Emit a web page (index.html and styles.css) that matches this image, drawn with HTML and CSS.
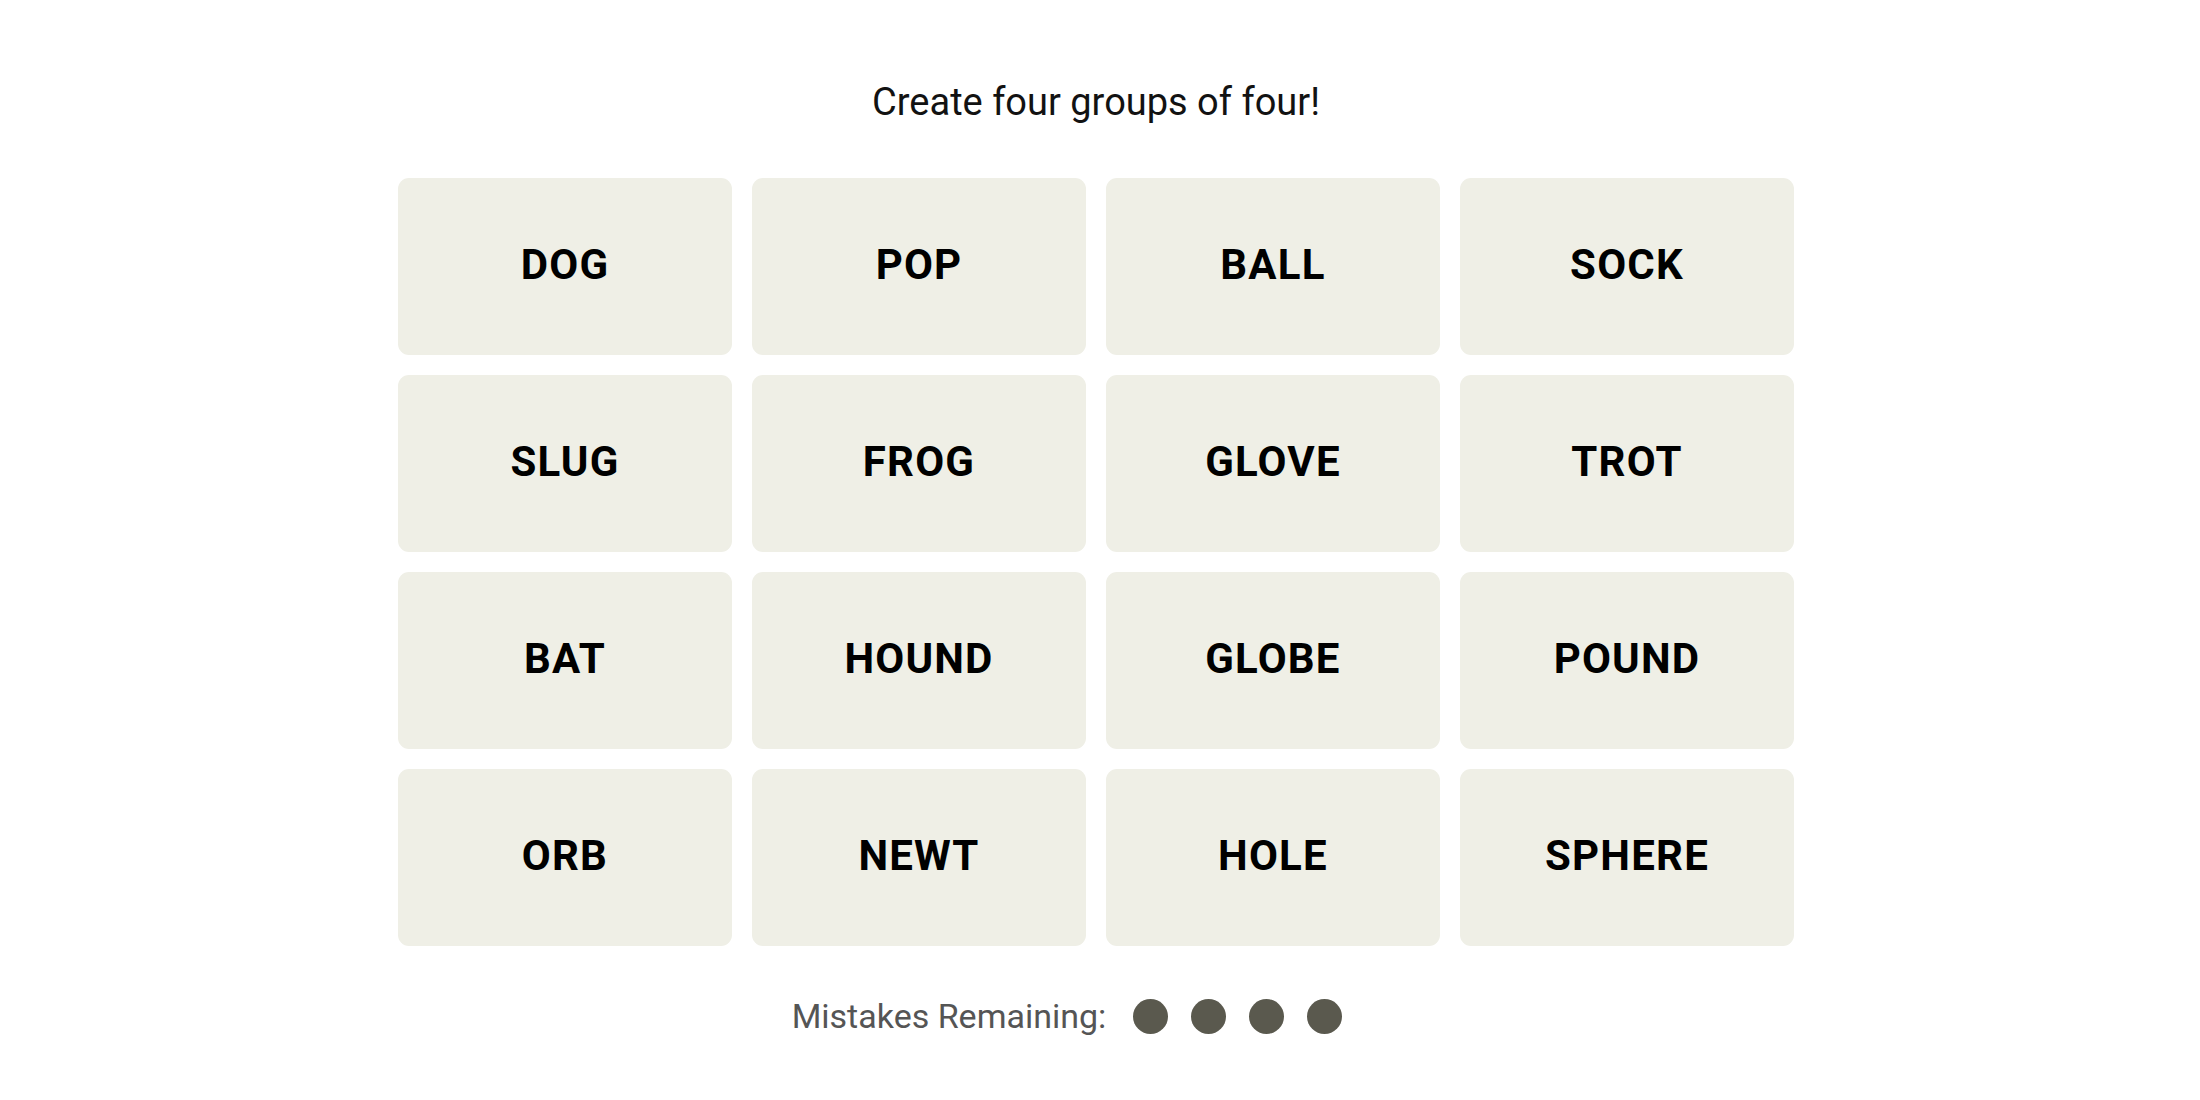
FILE: index.html
```html
<!DOCTYPE html>
<html lang="en">
<head>
<meta charset="utf-8">
<title>Connections</title>
<link rel="stylesheet" href="styles.css">
</head>
<body>
<main class="game">
  <p class="prompt">Create four groups of four!</p>
  <div class="board">
    <button class="tile">DOG</button>
    <button class="tile">POP</button>
    <button class="tile">BALL</button>
    <button class="tile">SOCK</button>
    <button class="tile">SLUG</button>
    <button class="tile">FROG</button>
    <button class="tile">GLOVE</button>
    <button class="tile">TROT</button>
    <button class="tile">BAT</button>
    <button class="tile">HOUND</button>
    <button class="tile">GLOBE</button>
    <button class="tile">POUND</button>
    <button class="tile">ORB</button>
    <button class="tile">NEWT</button>
    <button class="tile">HOLE</button>
    <button class="tile">SPHERE</button>
  </div>
  <div class="mistakes">
    <span class="mistakes-label">Mistakes Remaining:</span>
    <span class="dots">
      <span class="dot"></span>
      <span class="dot"></span>
      <span class="dot"></span>
      <span class="dot"></span>
    </span>
  </div>
</main>
</body>
</html>
```
FILE: styles.css
```css
html, body {
  margin: 0;
  padding: 0;
  background: #ffffff;
}

body {
  font-family: Roboto, "Liberation Sans", sans-serif;
  color: #121212;
  padding-right: 8px;
}

.game {
  width: 1396px;
  margin: 0 auto;
  display: flex;
  flex-direction: column;
  align-items: center;
}

.prompt {
  margin: 79px 0 0;
  font-size: 38px;
  line-height: 46px;
  font-weight: 400;
  color: #121212;
}

.board {
  margin-top: 53px;
  display: grid;
  grid-template-columns: repeat(4, 334px);
  grid-auto-rows: 177px;
  gap: 20px;
}

.tile {
  border: none;
  margin: 0;
  padding: 0 0 5px;
  background: #efefe6;
  border-radius: 11px;
  font-family: Roboto, "Liberation Sans", sans-serif;
  font-weight: 700;
  font-size: 42px;
  letter-spacing: 1.2px;
  color: #000000;
  display: flex;
  align-items: center;
  justify-content: center;
}

.mistakes {
  margin-top: 50px;
  display: flex;
  align-items: center;
  gap: 27px;
  padding-right: 58px;
}

.mistakes-label {
  font-size: 34px;
  line-height: 40px;
  color: #555555;
}

.dots {
  display: flex;
  gap: 23px;
}

.dot {
  width: 35px;
  height: 35px;
  border-radius: 50%;
  background: #5a594e;
}
```
